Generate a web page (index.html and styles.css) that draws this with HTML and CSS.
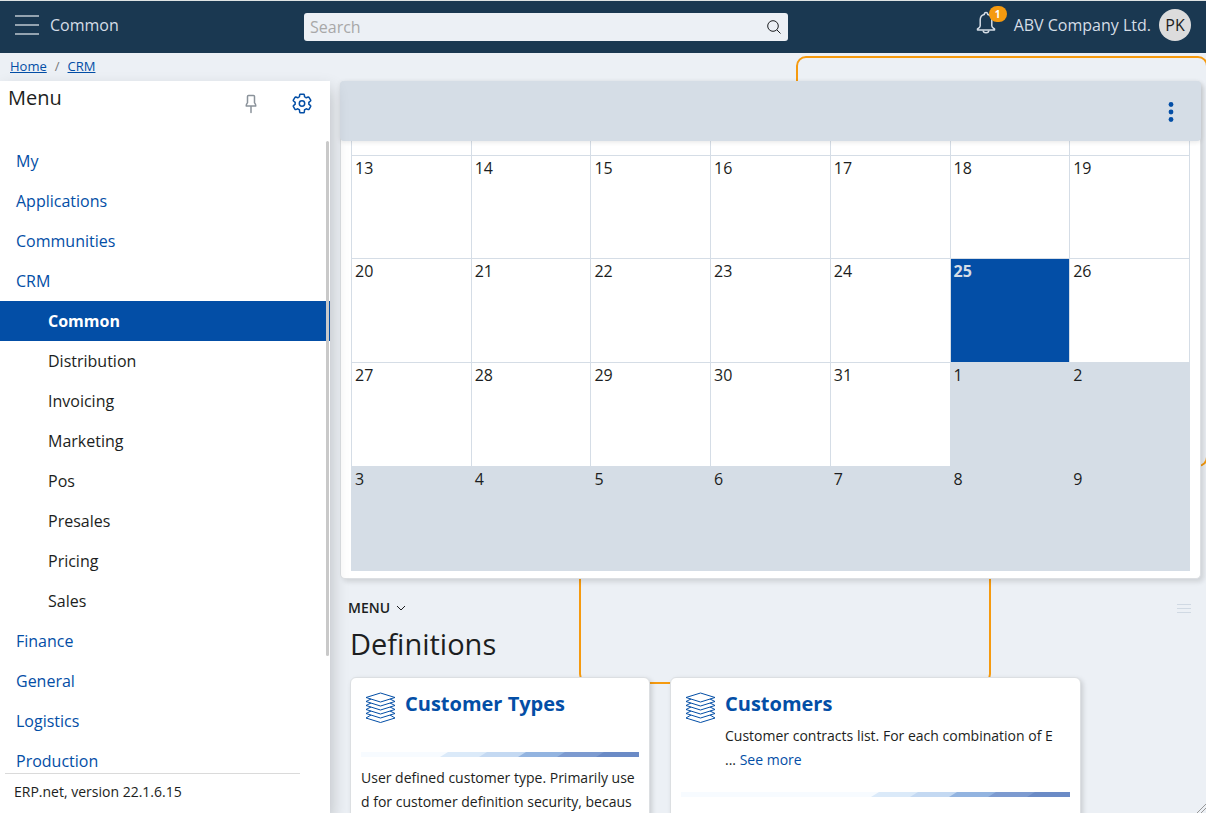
FILE: index.html
```html
<!DOCTYPE html>
<html lang="en">
<head>
<meta charset="utf-8">
<meta name="viewport" content="width=device-width, initial-scale=1">
<title>Common</title>
<link rel="stylesheet" href="styles.css">
</head>
<body>
<svg class="defs" width="0" height="0" aria-hidden="true">
  <symbol id="layers" viewBox="0 0 31 32">
    <path d="M1 5.500 15.500 1 30 5.500 15.500 10z"/>
    <path d="M6 7 1 9.500 15.500 14 30 9.500 25 7M6 11 1 13.500 15.500 18 30 13.500 25 11M6 15 1 17.500 15.500 22 30 17.500 25 15M6 19 1 21.500 15.500 26 30 21.500 25 19M6 23 1 26 15.500 30.500 30 26 25 23"/>
  </symbol>
</svg>
<header class="topbar">
  <div class="topbar-left">
    <button class="burger" type="button" aria-label="Toggle menu"><span></span><span></span><span></span></button>
    <span class="topbar-title">Common</span>
  </div>
  <form class="search" role="search">
    <input class="search-input" type="text" placeholder="Search" aria-label="Search">
    <button class="search-button" type="button" aria-label="Run search">
      <svg width="16" height="16" viewBox="0 0 16 16"><circle cx="7" cy="7" r="5.300"/><path d="m10.800 10.800 3.700 3.700"/></svg>
    </button>
  </form>
  <div class="account">
    <button class="bell" type="button" aria-label="Notifications">
      <svg width="20" height="24" viewBox="0 0 20 24"><path d="M8.300 3.500c0-2.600 3.400-2.600 3.400 0 2.500.6 4.100 2.500 4.100 5.500v6c0 1.300.8 1.900 2.700 3v1h-17v-1c1.900-1.100 2.700-1.700 2.700-3V9c0-3 1.600-4.900 4.100-5.500z"/><path d="M7.200 19.500a2.800 2.300 0 0 0 5.600 0"/></svg>
      <span class="badge">1</span>
    </button>
    <span class="company">ABV Company Ltd.</span>
    <button class="avatar" type="button">PK</button>
  </div>
</header>
<div class="page">
  <div class="frame frame-top"></div>
  <div class="frame frame-bottom"></div>
  <nav class="breadcrumb" aria-label="Breadcrumb"><a href="#">Home</a><span>/</span><a href="#">CRM</a></nav>
  <div class="columns">
    <aside class="sidebar">
      <div class="sidebar-head">
        <h2 class="sidebar-title">Menu</h2>
        <button class="icon-button pin" type="button" aria-label="Pin menu">
          <svg width="12" height="20" viewBox="0 0 12 20"><path d="M3.500 1.500h5c.8 0 1 .5 1 1v6.300c.9.800 1.300 1.700 1.300 3.200H1.200c0-1.500.4-2.400 1.300-3.200V2.500c0-.5.200-1 1-1zM6 12v6.500"/></svg>
        </button>
        <button class="icon-button gear" type="button" aria-label="Settings">
          <svg width="22" height="22" viewBox="0 0 22 22"><path d="M9.300 1.200h3.400q.5 0 .6.600l.3 2.100q.8.300 1.600.9l2-.8q.5-.2.800.3l1.700 2.900q.2.500-.2.800l-1.700 1.400q.2.800 0 1.800l1.700 1.400q.4.300.2.800L18 16.300q-.3.400-.8.300l-2-.8q-.8.600-1.600.9l-.3 2.500q-.1.600-.6.600H9.300q-.5 0-.6-.6l-.3-2.500q-.8-.3-1.600-.9l-2 .8q-.5.100-.8-.3l-1.700-2.900q-.2-.5.200-.8l1.700-1.400q-.2-1 0-1.800L2.500 8q-.4-.3-.2-.8L4 4.300q.3-.5.800-.3l2 .8q.8-.6 1.600-.9l.3-2.100q.1-.6.600-.6z"/><circle cx="11" cy="10.500" r="2.700"/></svg>
        </button>
      </div>
      <div class="nav-wrap">
        <ul class="nav">
          <li><a href="#">My</a></li>
          <li><a href="#">Applications</a></li>
          <li><a href="#">Communities</a></li>
          <li><a href="#">CRM</a></li>
          <li><a class="sub active" href="#">Common</a></li>
          <li><a class="sub" href="#">Distribution</a></li>
          <li><a class="sub" href="#">Invoicing</a></li>
          <li><a class="sub" href="#">Marketing</a></li>
          <li><a class="sub" href="#">Pos</a></li>
          <li><a class="sub" href="#">Presales</a></li>
          <li><a class="sub" href="#">Pricing</a></li>
          <li><a class="sub" href="#">Sales</a></li>
          <li><a href="#">Finance</a></li>
          <li><a href="#">General</a></li>
          <li><a href="#">Logistics</a></li>
          <li><a href="#">Production</a></li>
        </ul>
        <div class="scroll-thumb"></div>
      </div>
      <footer class="version">ERP.net, version 22.1.6.15</footer>
    </aside>
    <main class="main">
      <section class="panel">
        <div class="panel-head">
          <button class="icon-button dots" type="button" aria-label="More options">
            <svg width="6" height="20" viewBox="0 0 6 20"><circle cx="3" cy="2.500" r="2.400"/><circle cx="3" cy="10" r="2.400"/><circle cx="3" cy="17.500" r="2.400"/></svg>
          </button>
        </div>
        <div class="panel-body">
          <table class="calendar">
            <tbody>
              <tr class="cut"><td></td><td></td><td></td><td></td><td></td><td></td><td></td></tr>
              <tr><td>13</td><td>14</td><td>15</td><td>16</td><td>17</td><td>18</td><td>19</td></tr>
              <tr><td>20</td><td>21</td><td>22</td><td>23</td><td>24</td><td class="today">25</td><td>26</td></tr>
              <tr><td>27</td><td>28</td><td>29</td><td>30</td><td>31</td><td class="other">1</td><td class="other">2</td></tr>
              <tr><td class="other">3</td><td class="other">4</td><td class="other">5</td><td class="other">6</td><td class="other">7</td><td class="other">8</td><td class="other">9</td></tr>
            </tbody>
          </table>
        </div>
      </section>
      <section class="definitions">
        <div class="section-bar">
          <button class="section-menu" type="button">MENU
            <svg width="10" height="6" viewBox="0 0 10 6"><path d="m1 1 4 4 4-4"/></svg>
          </button>
          <button class="icon-button grip" type="button" aria-label="Drag section"><span></span><span></span><span></span></button>
        </div>
        <h1 class="section-title">Definitions</h1>
        <div class="cards">
          <article class="card card-narrow">
            <header class="card-head">
              <svg class="layers" width="31" height="32"><use href="#layers"/></svg>
              <div><h3><a href="#">Customer Types</a></h3></div>
            </header>
            <svg class="stripe" height="5" aria-hidden="true"><svg x="100%" width="200" height="5" overflow="visible"><path fill="#dbeaf9" d="M-199 5l8-5H0v5z"/><path fill="#c4d9f2" d="M-160 5l8-5H0v5z"/><path fill="#93b4e0" d="M-121 5l8-5H0v5z"/><path fill="#7d9bd0" d="M-82 5l8-5H0v5z"/><path fill="#6b8bc6" d="M-43 5l8-5H0v5z"/></svg></svg>
            <p class="card-text">User defined customer type. Primarily used for customer definition security, becaus</p>
          </article>
          <article class="card card-wide">
            <header class="card-head">
              <svg class="layers" width="31" height="32"><use href="#layers"/></svg>
              <div>
                <h3><a href="#">Customers</a></h3>
                <p class="card-text">Customer contracts list. For each combination of E<br>... <a href="#">See more</a></p>
              </div>
            </header>
            <svg class="stripe" height="5" aria-hidden="true"><svg x="100%" width="200" height="5" overflow="visible"><path fill="#dbeaf9" d="M-199 5l8-5H0v5z"/><path fill="#c4d9f2" d="M-160 5l8-5H0v5z"/><path fill="#93b4e0" d="M-121 5l8-5H0v5z"/><path fill="#7d9bd0" d="M-82 5l8-5H0v5z"/><path fill="#6b8bc6" d="M-43 5l8-5H0v5z"/></svg></svg>
          </article>
        </div>
      </section>
    </main>
  </div>
  <svg class="resize" width="9" height="9" viewBox="0 0 9 9" aria-hidden="true"><path d="M0 9 9 0M4 9l5-5"/></svg>
</div>
</body>
</html>
```
FILE: styles.css
```css
* { box-sizing: border-box; }
body {
  margin: 0;
  height: 100vh;
  display: flex;
  flex-direction: column;
  overflow: hidden;
  background: #ecf0f5;
  color: #1c1e21;
  font: 16px/24px "Open Sans", "Noto Sans", sans-serif;
}
h1, h2, h3, p, ul { margin: 0; padding: 0; }
a { color: #034ea6; text-decoration: none; }
button { margin: 0; padding: 0; border: 0; background: none; color: inherit; font: inherit; }
svg { display: block; fill: none; stroke: currentColor; flex: none; }
.defs { position: absolute; }

.topbar {
  flex: none;
  display: grid;
  grid-template-columns: 304px minmax(200px, 484px) 1fr;
  align-items: center;
  height: 53px;
  padding-bottom: 4px;
  border-top: 1px solid #dfe3e3;
  background: #1a3851;
  color: #d5dde6;
}
.topbar-left { display: flex; align-items: center; gap: 11px; padding-left: 15px; }
.burger { display: flex; flex-direction: column; gap: 7px; width: 24px; }
.burger span { height: 2px; background: #94a3b0; }
.search { display: flex; align-items: center; height: 28px; margin-top: 4px; border-radius: 3px; background: #ecf0f5; }
.search-input { flex: 1; min-width: 0; padding: 0 6px; border: 0; outline: 0; background: none; font: inherit; color: #1c1e21; }
.search-input::placeholder { color: #a8a8a8; opacity: 1; }
.search-button { padding-right: 6px; color: #1c1e21; }
.account { display: flex; align-items: center; justify-content: flex-end; padding-right: 15px; }
.bell { position: relative; margin: 0 18px 4px 0; }
.bell svg { stroke-width: 1.5; stroke-linejoin: round; }
.badge {
  position: absolute;
  left: 13px;
  top: -5px;
  width: 18px;
  height: 16px;
  border-radius: 8px;
  background: #f59a0f;
  color: #fff;
  font-size: 10px;
  font-weight: 700;
  line-height: 16px;
  text-align: center;
}
.avatar { width: 32px; height: 32px; margin-left: 8px; border-radius: 50%; background: #dcdcdc; color: #1c1e21; }

.page { position: relative; z-index: 0; flex: 1; min-height: 0; display: flex; flex-direction: column; overflow: hidden; }
.frame { position: absolute; z-index: -1; width: 412px; height: 411px; border: 2px solid #f59a0f; border-radius: 10px; }
.frame-top { top: 3px; right: -2px; }
.frame-bottom { top: 220px; left: 579px; }
.breadcrumb { flex: none; display: flex; gap: 8px; height: 28px; padding-left: 10px; color: #777; font-size: 13px; line-height: 27px; }
.breadcrumb a { text-decoration: underline; }
.columns { flex: 1; min-height: 0; display: flex; }

.sidebar { position: relative; z-index: 1; flex: none; width: 330px; display: flex; flex-direction: column; background: #fff; box-shadow: 2px 8px 16px rgba(0, 0, 0, 0.2); }
.sidebar-head { display: flex; align-items: center; height: 60px; padding: 0 17px 14px 8px; }
.sidebar-title { flex: 1; font-size: 20px; font-weight: 400; line-height: 24px; padding-bottom: 12px; }
.pin { color: #8a929a; margin-right: 34px; }
.gear { color: #034ea6; }
.pin svg, .gear svg { stroke-width: 1.5; stroke-linejoin: round; stroke-linecap: round; }
.nav-wrap { position: relative; flex: 1; min-height: 0; overflow: hidden; }
.nav { list-style: none; }
.nav a { display: block; padding: 8px 16px; }
.nav .sub { padding-left: 48px; color: #1c1e21; }
.nav .active { background: #034ea6; color: #fff; font-weight: 700; }
.scroll-thumb { position: absolute; top: 0; right: 1px; width: 3px; height: 515px; border-radius: 2px; background: #c9c9c9; }
.version { flex: none; height: 40px; margin: 0 30px 0 5px; padding: 6px 9px; border-top: 1px solid #dadada; font-size: 14px; }

.main { flex: 1; min-width: 0; padding: 0 5px 0 10px; }
.panel { border: 1px solid #dcdfe2; border-top: 0; border-radius: 5px; background: #fff; box-shadow: 3px 3px 5px rgba(0, 0, 0, 0.12); }
.panel-head {
  position: relative;
  display: flex;
  align-items: center;
  justify-content: flex-end;
  height: 60px;
  margin: 0 -1px;
  padding: 2px 27px 0 0;
  border-radius: 4px;
  background: #d5dde6;
  box-shadow: 0 1px 5px rgba(0, 0, 0, 0.1);
}
.dots { color: #034ea6; }
.dots svg { fill: currentColor; stroke: none; }
.panel-body { padding: 0 10px 7px; }
.calendar { width: 100%; height: 430px; table-layout: fixed; border-collapse: collapse; }
.calendar td { padding: 0 3px; border: 1px solid #d5dde6; vertical-align: top; }
.calendar .cut td { height: 14px; border-top: 0; }
.calendar .today { background: #034ea6; color: #d5dde6; font-weight: 700; }
.calendar .other { background: #d5dde6; }

.section-bar { display: flex; align-items: center; justify-content: space-between; padding: 17px 10px 0 8px; }
.section-menu { display: flex; align-items: center; gap: 6px; font-size: 14px; font-weight: 600; }
.grip { display: flex; flex-direction: column; gap: 3px; width: 14px; }
.grip span { height: 1px; background: #d0d9e3; }
.section-title { padding-left: 10px; font-size: 29px; font-weight: 400; line-height: 48px; }
.cards { display: flex; gap: 20px; padding: 9px 10px; }
.card { height: 240px; padding: 10px; border: 1px solid #dcdfe2; border-radius: 6px; background: #fff; box-shadow: 2px 2px 5px rgba(0, 0, 0, 0.15); }
.card-narrow { flex: 0 1 300px; }
.card-wide { flex: 0 1 411px; }
.card-head { display: flex; gap: 9px; min-height: 64px; padding-left: 4px; }
.card-head h3 { font-size: 20px; line-height: 32px; padding-bottom: 4px; }
.card-head .card-text { padding-bottom: 20px; }
.layers { margin-top: 4px; color: #034ea6; }
.stripe { width: 100%; background: #f7fbff; overflow: hidden; }
.stripe, .stripe svg { stroke: none; }
.card-text { font-size: 14px; line-height: 24px; word-break: break-all; }
.card > .card-text { padding-top: 9px; }
.resize { position: absolute; right: 0; bottom: 0; color: #999; }
```
